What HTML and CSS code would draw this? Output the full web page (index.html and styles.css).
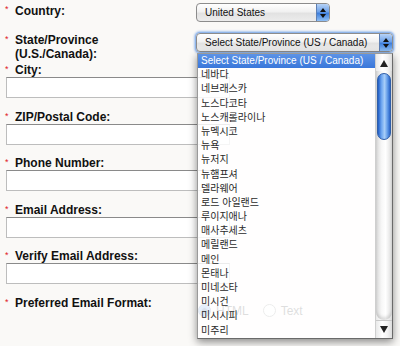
FILE: index.html
```html
<!DOCTYPE html>
<html>

<head>
    <title>Contact Details</title>
    <link rel="stylesheet" href="styles.css">
</head>

<body>
    <div class="form">
        <div class="row row-country">
            <div class="label"><span class="req">*</span>Country:</div>
            <div class="select select-country">
                <span class="select-text">United States</span>
                <span class="select-arrows"><i class="up"></i><i class="down"></i></span>
            </div>
        </div>
        <div class="row row-state">
            <div class="label"><span class="req">*</span>State/Province<br>(U.S./Canada):</div>
            <div class="select select-state">
                <span class="select-text">Select State/Province (US / Canada)</span>
                <span class="select-arrows"><i class="up"></i><i class="down"></i></span>
            </div>
        </div>

        <div class="field">
            <div class="label"><span class="req">*</span>City:</div>
            <div class="input"></div>
        </div>
        <div class="field">
            <div class="label"><span class="req">*</span>ZIP/Postal Code:</div>
            <div class="input"></div>
        </div>
        <div class="field">
            <div class="label"><span class="req">*</span>Phone Number:</div>
            <div class="input"></div>
        </div>
        <div class="field">
            <div class="label"><span class="req">*</span>Email Address:</div>
            <div class="input"></div>
        </div>
        <div class="field">
            <div class="label"><span class="req">*</span>Verify Email Address:</div>
            <div class="input"></div>
        </div>
        <div class="row row-format">
            <div class="label"><span class="req">*</span>Preferred Email Format:</div>
            <div class="radios">
                <span class="radio on"></span><span class="radio-text">HTML</span>
                <span class="radio"></span><span class="radio-text">Text</span>
            </div>
        </div>
    </div>

    <!-- open state list -->
    <div class="menu">
        <ul class="options">
            <li class="selected">Select State/Province (US / Canada)</li>
            <li>네바다</li>
            <li>네브래스카</li>
            <li>노스다코타</li>
            <li>노스캐롤라이나</li>
            <li>뉴멕시코</li>
            <li>뉴욕</li>
            <li>뉴저지</li>
            <li>뉴햄프셔</li>
            <li>델라웨어</li>
            <li>로드 아일랜드</li>
            <li>루이지애나</li>
            <li>매사추세츠</li>
            <li>메릴랜드</li>
            <li>메인</li>
            <li>몬태나</li>
            <li>미네소타</li>
            <li>미시건</li>
            <li>미시시피</li>
            <li>미주리</li>
        </ul>
        <div class="scrollbar">
            <div class="sb-up"></div>
            <div class="sb-track">
                <div class="sb-thumb"></div>
            </div>
            <div class="sb-down"></div>
        </div>
    </div>
</body>

</html>
```

FILE: styles.css
```css
body {
    margin: 0;
    background-color: #faf9f7;
    font-family: "Liberation Sans", Arial, sans-serif;
    color: #111;
}

.form {
    padding: 3px 0 0 5px;
}

.label {
    font-size: 12px;
    font-weight: bold;
    line-height: 14px;
    padding-left: 10px;
    position: relative;
}

.req {
    position: absolute;
    left: 0;
    top: -1px;
    color: #e0201c;
    font-size: 9px;
    font-weight: normal;
}

.row {
    display: flex;
    align-items: flex-start;
}

.row .label {
    width: 181px;
    flex-shrink: 0;
}

.row-country {
    margin-bottom: 11px;
}

.row-country .label {
    padding-top: 1px;
}

.row-state {
    margin-bottom: 2px;
}

/* mac style popup buttons */
.select {
    height: 17px;
    border: 1px solid #8c8c8c;
    border-radius: 4px;
    background: linear-gradient(#ffffff, #f1f1f1 45%, #e2e2e2 55%, #ececec);
    display: flex;
    align-items: center;
    font-size: 10px;
    color: #111;
    box-sizing: content-box;
}

.select-country {
    width: 132px;
}

.select-state {
    width: 195px;
    box-shadow: 0 0 0 1px #8fb5ea, 0 0 2px 2px #a9c6ef;
}

.select-text {
    flex: 1;
    padding-left: 8px;
    white-space: nowrap;
}

.select-arrows {
    width: 12px;
    height: 17px;
    border-left: 1px solid #5d7fb4;
    border-radius: 0 3px 3px 0;
    background: linear-gradient(#b7d3f6, #6ea2ea 45%, #3f7fdc 55%, #8fc0f6);
    display: flex;
    flex-direction: column;
    align-items: center;
    justify-content: center;
    gap: 2px;
}

.select-arrows i {
    width: 0;
    height: 0;
    border-left: 3px solid transparent;
    border-right: 3px solid transparent;
}

.select-arrows .up {
    border-bottom: 4px solid #111;
}

.select-arrows .down {
    border-top: 4px solid #111;
}

.field {
    margin-bottom: 11.5px;
}

.input {
    margin-left: 1px;
    width: 222px;
    height: 19px;
    border: 1px solid #bdbdbd;
    border-top-color: #8a8a8a;
    background-color: #ffffff;
}

.row-format .label {
    padding-top: 0;
}

.radios {
    display: flex;
    align-items: center;
    padding: 8px 0 0 2px;
    font-size: 12px;
    color: #333;
}

.radio {
    width: 11px;
    height: 11px;
    border-radius: 50%;
    border: 1px solid #888;
    background: #fff;
    margin-right: 5px;
}

.radio.on {
    background: radial-gradient(circle, #1a3f80 25%, #4b8ae0 35%, #8fbcf0);
    border-color: #3a63a8;
}

.radio-text {
    margin-right: 14px;
}

/* dropdown list */
.menu {
    position: absolute;
    left: 197px;
    top: 53px;
    width: 194px;
    height: 284px;
    display: flex;
    background-color: rgba(255, 255, 255, 0.84);
    border: 1px solid #6a6a6a;
    border-left-color: #9a9a9a;
    border-top-color: #9a9a9a;
    box-shadow: 0 3px 8px rgba(0, 0, 0, 0.45);
}

.options {
    list-style: none;
    margin: 0;
    padding: 0;
    flex: 1;
    font-family: "Liberation Sans", "Noto Sans CJK KR", sans-serif;
    font-size: 10px;
    color: #2a2a2a;
}

.options li {
    height: 14.2px;
    line-height: 14.2px;
    padding-left: 3px;
    white-space: nowrap;
}

.options li.selected {
    background: linear-gradient(#5d93e6, #3a77da);
    color: #ffffff;
}

.scrollbar {
    width: 16px;
    display: flex;
    flex-direction: column;
    background: linear-gradient(to right, #e9e9e9, #ffffff 40%, #f4f4f4 70%, #dcdcdc);
    border-left: 1px solid #cfcfcf;
}

.sb-up,
.sb-down {
    height: 17px;
    position: relative;
}

.sb-up::after,
.sb-down::after {
    content: "";
    position: absolute;
    left: 4px;
    width: 0;
    height: 0;
    border-left: 4px solid transparent;
    border-right: 4px solid transparent;
}

.sb-up::after {
    top: 6px;
    border-bottom: 7px solid #222;
}

.sb-down::after {
    top: 5px;
    border-top: 7px solid #222;
}

.sb-down {
    border-top: 1px solid #c8c8c8;
}

.sb-track {
    flex: 1;
    border-radius: 0 0 8px 8px;
    background: linear-gradient(to right, #d9d9d9, #f7f7f7 35%, #ffffff 60%, #dcdcdc);
    box-shadow: inset 0 -3px 3px rgba(0, 0, 0, 0.12);
    padding-top: 2px;
}

.sb-thumb {
    margin: 0 1px;
    height: 67px;
    border-radius: 7px;
    border: 1px solid #2f5ea8;
    box-sizing: border-box;
    background: linear-gradient(to right, #1f5cc4, #6fa7f0 30%, #a8cef8 55%, #5d97e6 80%, #2a64c8);
}
```
